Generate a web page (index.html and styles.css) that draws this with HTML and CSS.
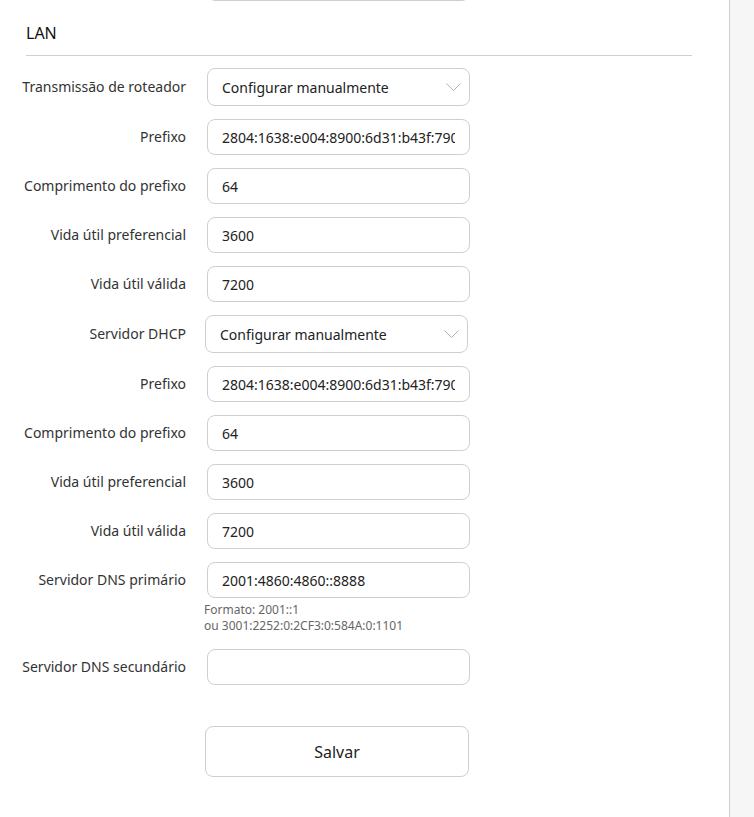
FILE: index.html
```html
<!DOCTYPE html>
<html lang="pt-BR">
<head>
  <meta charset="UTF-8" />
  <meta name="viewport" content="width=device-width, initial-scale=1.0"/>
  <title>LAN IPv6</title>
  <link rel="stylesheet" href="styles.css">
</head>
<body>

  <div class="card">
    <div class="prev-field"></div>

    <h2 class="section-title">LAN</h2>

    <div class="form">
      <div class="row">
        <label class="label tall">Transmissão de roteador</label>
        <div class="select">
          <span>Configurar manualmente</span>
          <svg class="chevron" width="15" height="8" viewBox="0 0 15 8"><path d="M0.5 0.5 L7.5 7.5 L14.5 0.5" fill="none" stroke="#b3b3b3" stroke-width="1"/></svg>
        </div>
      </div>
      <div class="row">
        <label class="label">Prefixo</label>
        <input class="input" type="text" value="2804:1638:e004:8900:6d31:b43f:7900::">
      </div>
      <div class="row">
        <label class="label">Comprimento do prefixo</label>
        <input class="input" type="text" value="64">
      </div>
      <div class="row">
        <label class="label">Vida útil preferencial</label>
        <input class="input" type="text" value="3600">
      </div>
      <div class="row">
        <label class="label">Vida útil válida</label>
        <input class="input" type="text" value="7200">
      </div>

      <div class="row">
        <label class="label tall">Servidor DHCP</label>
        <div class="select shifted">
          <span>Configurar manualmente</span>
          <svg class="chevron" width="15" height="8" viewBox="0 0 15 8"><path d="M0.5 0.5 L7.5 7.5 L14.5 0.5" fill="none" stroke="#b3b3b3" stroke-width="1"/></svg>
        </div>
      </div>
      <div class="row">
        <label class="label">Prefixo</label>
        <input class="input" type="text" value="2804:1638:e004:8900:6d31:b43f:7900::">
      </div>
      <div class="row">
        <label class="label">Comprimento do prefixo</label>
        <input class="input" type="text" value="64">
      </div>
      <div class="row">
        <label class="label">Vida útil preferencial</label>
        <input class="input" type="text" value="3600">
      </div>
      <div class="row">
        <label class="label">Vida útil válida</label>
        <input class="input" type="text" value="7200">
      </div>
      <div class="row">
        <label class="label">Servidor DNS primário</label>
        <div class="field">
          <input class="input" type="text" value="2001:4860:4860::8888">
          <div class="hint">Formato: 2001::1<br>ou 3001:2252:0:2CF3:0:584A:0:1101</div>
        </div>
      </div>
      <div class="row">
        <label class="label">Servidor DNS secundário</label>
        <input class="input" type="text" value="">
      </div>
    </div>

    <button class="save-btn">Salvar</button>
  </div>

</body>
</html>
```

FILE: styles.css
```css
* {
  box-sizing: border-box;
}

body {
  margin: 0;
  padding: 0;
  background: #f6f6f6;
  font-family: 'Noto Sans', 'Open Sans', sans-serif;
  color: #333;
  overflow: hidden;
}

.card {
  display: flow-root;
  width: 730px;
  height: 830px;
  background: #fff;
  border-right: 1px solid #cccccc;
  border-bottom-right-radius: 4px;
}

.prev-field {
  margin-left: 207px;
  margin-top: -35px;
  width: 263px;
  height: 36px;
  border: 1px solid #cfcfcf;
  border-radius: 8px;
}

.section-title {
  margin: 21px 37px 0 26px;
  padding-bottom: 11px;
  font-size: 16px;
  line-height: 22px;
  font-weight: normal;
  color: #111;
  border-bottom: 1px solid #cfcfcf;
}

.form {
  padding-top: 12px;
}

.row {
  display: flex;
  align-items: flex-start;
  margin-bottom: 13px;
}

.label {
  width: 186px;
  margin-right: 21px;
  text-align: right;
  font-size: 14px;
  line-height: 36px;
  color: #333;
  white-space: nowrap;
}

.label.tall {
  line-height: 38px;
}

.input {
  width: 263px;
  height: 36px;
  padding: 0 14px;
  border: 1px solid #cfcfcf;
  border-radius: 8px;
  font-family: inherit;
  font-size: 14px;
  color: #222;
  background: #fff;
  outline: none;
}

.select {
  width: 263px;
  height: 38px;
  padding: 0 8px 0 14px;
  border: 1px solid #cfcfcf;
  border-radius: 8px;
  display: flex;
  align-items: center;
  justify-content: space-between;
  font-size: 14px;
  color: #222;
}

.select.shifted {
  margin-left: -2px;
}

.chevron {
  display: block;
}

.hint {
  margin: 4px 0 0 -3px;
  padding-bottom: 2px;
  font-size: 12px;
  line-height: 16px;
  color: #666;
}

.save-btn {
  display: block;
  margin: 41px 0 0 205px;
  width: 264px;
  height: 51px;
  background: #fff;
  border: 1px solid #cfcfcf;
  border-radius: 8px;
  font-family: inherit;
  font-size: 16px;
  color: #222;
  cursor: pointer;
}
```
